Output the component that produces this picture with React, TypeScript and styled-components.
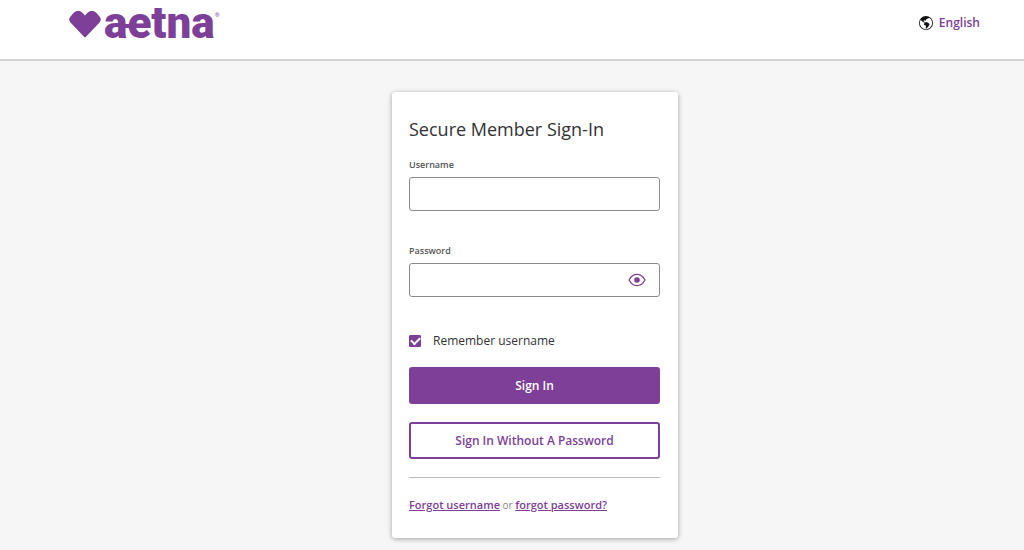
import React, { useState } from "react";
import styled, { createGlobalStyle } from "styled-components";
import { BsGlobeAmericas } from "react-icons/bs";

const purple = "#7d3f98";

const GlobalStyle = createGlobalStyle`
  * { box-sizing: border-box; }
  body {
    margin: 0;
    background: #f6f6f6;
    color: #333;
    font-family: "Open Sans", "Noto Sans", sans-serif;
  }
`;

const Header = styled.header`
  display: flex;
  align-items: flex-start;
  justify-content: space-between;
  height: 61px;
  padding: 0 44px 0 69px;
  background: #fff;
  border-bottom: 2px solid #d2d2d2;
`;

const Logo = styled.a`
  position: relative;
  display: flex;
  align-items: flex-start;
  color: ${purple};
  text-decoration: none;

  svg { margin-top: 10px; }
`;

const Wordmark = styled.span`
  margin-left: 3px;
  font: 900 44px/46px Roboto, sans-serif;
`;

const Ligature = styled.span`
  position: absolute;
  top: 24px;
  left: 56px;
  width: 8px;
  height: 4px;
  background: ${purple};
`;

const Registered = styled.span`
  margin-top: 11px;
  font-size: 6px;
  line-height: 8px;
`;

const Language = styled.a`
  display: flex;
  align-items: center;
  gap: 6px;
  padding-top: 14px;
  color: ${purple};
  font-size: 12px;
  font-weight: 600;
  line-height: 18px;
  text-decoration: none;

  svg { color: #111; }
`;

const Main = styled.main`
  display: flex;
  justify-content: center;
  padding: 31px 0 12px 46px;
`;

const Card = styled.form`
  width: 286px;
  padding: 25px 18px 24px 17px;
  background: #fff;
  border-radius: 3px;
  box-shadow: 0 1px 5px rgba(0, 0, 0, 0.35);
`;

const Title = styled.h1`
  margin: 0 0 18px;
  font-size: 18px;
  font-weight: 400;
  line-height: 24px;
`;

const Field = styled.div`
  margin-bottom: 34px;
`;

const FieldLabel = styled.label`
  display: block;
  margin-bottom: 6px;
  color: #555;
  font-size: 9px;
  font-weight: 600;
  line-height: 12px;
`;

const InputBox = styled.div`
  display: flex;
  align-items: center;
  height: 34px;
  border: 1px solid #8c8c8c;
  border-radius: 3px;
  background: #fff;
`;

const Input = styled.input`
  flex: 1;
  min-width: 0;
  height: 100%;
  padding: 0 10px;
  border: 0;
  outline: 0;
  background: transparent;
  font: inherit;
  font-size: 12px;
`;

const RevealButton = styled.button`
  display: flex;
  margin-right: 13px;
  padding: 0;
  border: 0;
  background: none;
  color: ${purple};
  cursor: pointer;
`;

const Remember = styled.label`
  display: flex;
  align-items: center;
  gap: 12px;
  margin-bottom: 16px;
  font-size: 12px;
  line-height: 20px;
`;

const Checkbox = styled.input`
  appearance: none;
  width: 12px;
  height: 12px;
  margin: 0;
  border: 1px solid ${purple};
  border-radius: 1px;
  display: grid;
  place-items: center;

  &:checked { background: ${purple}; }
  &:checked::before {
    content: "";
    width: 7px;
    height: 4px;
    border: solid #fff;
    border-width: 0 0 2px 2px;
    transform: translateY(-1px) rotate(-45deg);
  }
`;

const Button = styled.button<{ $filled?: boolean }>`
  display: block;
  width: 100%;
  height: 37px;
  margin-bottom: 18px;
  padding: 0;
  border: 2px solid ${purple};
  border-radius: 3px;
  background: ${(p) => (p.$filled ? purple : "#fff")};
  color: ${(p) => (p.$filled ? "#fff" : purple)};
  font: inherit;
  font-size: 12px;
  font-weight: 600;
  cursor: pointer;
`;

const Divider = styled.hr`
  height: 1px;
  margin: 0 0 18px;
  border: 0;
  background: #bbb;
`;

const Help = styled.p`
  margin: 0;
  color: #888;
  font-size: 10px;
  line-height: 18px;
`;

const HelpLink = styled.a`
  color: ${purple};
  font-size: 11px;
  font-weight: 600;
  text-decoration: underline;
`;

const Heart = () => (
  <svg width="32" height="28" viewBox="0 0 32 28" fill="currentColor" aria-hidden="true">
    <path d="M9 1C7.500 1 6 1.500 4.500 3L1.500 6.500C-.2 8.500-.2 10.500 1.500 12.500L15 26.700Q16 27.700 17 26.700L30.500 12.500C32.200 10.500 32.200 8.500 30.500 6.500L27.500 3C26 1.500 24.500 1 23 1C21.300 1 20 1.300 18.500 2.800L16 5.500L13.500 2.800C12 1.300 10.700 1 9 1Z" />
  </svg>
);

const Eye = () => (
  <svg width="18" height="14" viewBox="0 0 18 14" fill="none" aria-hidden="true">
    <path d="M1 7C3 3.300 5.700 1.400 9 1.400S15 3.300 17 7C15 10.700 12.300 12.600 9 12.600S3 10.700 1 7Z" stroke="currentColor" strokeWidth="1.300" strokeLinejoin="round" />
    <circle cx="9" cy="7" r="2.800" fill="currentColor" />
  </svg>
);

export default function App() {
  const [remember, setRemember] = useState(true);
  const [visible, setVisible] = useState(false);

  return (
    <>
      <GlobalStyle />
      <Header>
        <Logo href="#">
          <Heart />
          <Wordmark>aetna</Wordmark>
          <Ligature />
          <Registered>®</Registered>
        </Logo>
        <Language href="#">
          <BsGlobeAmericas size={14} />
          English
        </Language>
      </Header>
      <Main>
        <Card onSubmit={(e) => e.preventDefault()}>
          <Title>Secure Member Sign-In</Title>
          <Field>
            <FieldLabel htmlFor="username">Username</FieldLabel>
            <InputBox>
              <Input id="username" type="text" autoComplete="username" />
            </InputBox>
          </Field>
          <Field>
            <FieldLabel htmlFor="password">Password</FieldLabel>
            <InputBox>
              <Input id="password" type={visible ? "text" : "password"} autoComplete="current-password" />
              <RevealButton type="button" aria-label="Show password" onClick={() => setVisible(!visible)}>
                <Eye />
              </RevealButton>
            </InputBox>
          </Field>
          <Remember>
            <Checkbox type="checkbox" checked={remember} onChange={(e) => setRemember(e.target.checked)} />
            Remember username
          </Remember>
          <Button type="submit" $filled>Sign In</Button>
          <Button type="button">Sign In Without A Password</Button>
          <Divider />
          <Help>
            <HelpLink href="#">Forgot username</HelpLink> or <HelpLink href="#">forgot password?</HelpLink>
          </Help>
        </Card>
      </Main>
    </>
  );
}
